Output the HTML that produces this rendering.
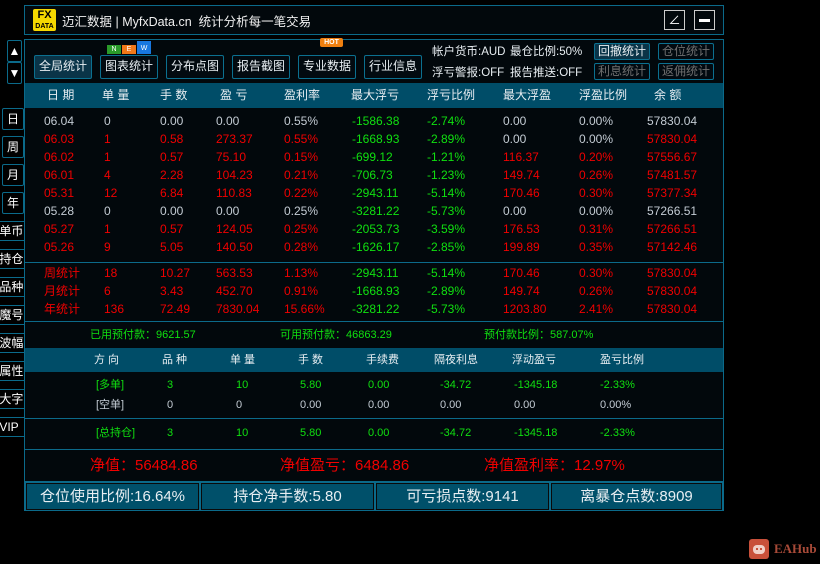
<!DOCTYPE html>
<html><head><meta charset="utf-8"><style>
*{margin:0;padding:0;box-sizing:border-box}
body{width:820px;height:564px;background:#000;position:relative;overflow:hidden;font-family:"Liberation Sans","Noto Sans CJK SC",sans-serif;font-size:12px;color:#d8dde2}
.a{position:absolute;white-space:nowrap}
.box{position:absolute;border:1px solid #0b6a8a}
.btn{position:absolute;border:1px solid #0b7090;background:#020a10;color:#e8eef2;font-size:12px;text-align:center;line-height:21px;border-radius:2px}
.row{position:absolute;left:0;height:18px;line-height:18px;width:700px}
.row span{position:absolute;white-space:nowrap}
.g{color:#c4ccd4}.r{color:#f00000}.gr{color:#10e010}
.lb{position:absolute;left:2px;width:22px;height:22px;border:1px solid #0b6a8a;border-radius:2px;color:#fff;text-align:center;line-height:20px;font-size:12px;background:#000}
.lb2{position:absolute;left:-4px;width:28px;height:20px;border-top:1px solid #0b6a8a;border-bottom:1px solid #0b6a8a;color:#fff;line-height:18px;font-size:12px;overflow:hidden}
.bb{position:absolute;top:483px;height:27px;background:#00506a;border:1px solid #0a0a0a;outline:1px solid #0b6a8a;color:#e8eef2;font-size:15px;text-align:center;line-height:26px}
.inf{position:absolute;white-space:nowrap;color:#e8eef2;font-size:11.5px}
</style></head><body>
<div class="box" style="left:24px;top:5px;width:700px;height:30px;background:#02080c"></div>
<div class="a" style="left:33px;top:9px;width:23px;height:22px;background:#f5d800;border-radius:2px;color:#000;font-weight:bold;text-align:center;line-height:10px;font-size:11px;padding-top:1px">FX<br><span style="font-size:7px">DATA</span></div>
<div class="a" style="left:62px;top:11px;font-size:12.5px;color:#f0f0f0">迈汇数据 | MyfxData.cn &nbsp;统计分析每一笔交易</div>
<div class="a" style="left:664px;top:10px;width:21px;height:20px;border:1px solid #ccc;color:#fff;text-align:center;line-height:18px;font-size:12px">∠</div>
<div class="a" style="left:694px;top:10px;width:21px;height:20px;border:1px solid #ccc"><div class="a" style="left:4px;top:8px;width:11px;height:3px;background:#fff"></div></div>
<div class="lb" style="top:40px;width:15px;left:7px">▲</div>
<div class="lb" style="top:62px;width:15px;left:7px">▼</div>
<div class="lb" style="top:108px">日</div>
<div class="lb" style="top:136px">周</div>
<div class="lb" style="top:164px">月</div>
<div class="lb" style="top:192px">年</div>
<div class="lb2" style="top:221px">&nbsp;单币</div>
<div class="lb2" style="top:249px">&nbsp;持仓</div>
<div class="lb2" style="top:277px">&nbsp;品种</div>
<div class="lb2" style="top:305px">&nbsp;魔号</div>
<div class="lb2" style="top:333px">&nbsp;波幅</div>
<div class="lb2" style="top:361px">&nbsp;属性</div>
<div class="lb2" style="top:389px">&nbsp;大字</div>
<div class="lb2" style="top:417px">&nbsp;VIP</div>
<div class="box" style="left:24px;top:39px;width:700px;height:472px;background:#02080c"></div>
<div class="btn" style="left:34px;top:55px;width:58px;height:24px;background:#0a3448">全局统计</div>
<div class="btn" style="left:100px;top:55px;width:58px;height:24px">图表统计</div>
<div class="btn" style="left:166px;top:55px;width:58px;height:24px">分布点图</div>
<div class="btn" style="left:232px;top:55px;width:58px;height:24px">报告截图</div>
<div class="btn" style="left:298px;top:55px;width:58px;height:24px">专业数据</div>
<div class="btn" style="left:364px;top:55px;width:58px;height:24px">行业信息</div>
<div class="a" style="left:107px;top:45px;width:14px;height:9px;background:#2a9a2a;color:#fff;font-size:7px;text-align:center;line-height:9px">N</div>
<div class="a" style="left:122px;top:45px;width:14px;height:9px;background:#f07818;color:#fff;font-size:7px;text-align:center;line-height:9px">E</div>
<div class="a" style="left:137px;top:41px;width:14px;height:13px;background:#1878e0;color:#fff;font-size:7px;text-align:center;line-height:15px">W</div>
<div class="a" style="left:320px;top:38px;width:23px;height:9px;background:#f08010;color:#fff;font-size:7px;font-weight:bold;text-align:center;line-height:9px;border-radius:2px">HOT</div>
<div class="inf" style="left:432px;top:43px">帐户货币:AUD</div>
<div class="inf" style="left:510px;top:43px">最仓比例:50%</div>
<div class="inf" style="left:432px;top:64px">浮亏警报:OFF</div>
<div class="inf" style="left:510px;top:64px">报告推送:OFF</div>
<div class="btn" style="left:594px;top:43px;width:56px;height:17px;line-height:15px;background:#0a3448">回撤统计</div>
<div class="btn" style="left:658px;top:43px;width:56px;height:17px;line-height:15px;color:#707070">仓位统计</div>
<div class="btn" style="left:594px;top:63px;width:56px;height:17px;line-height:15px;color:#707070">利息统计</div>
<div class="btn" style="left:658px;top:63px;width:56px;height:17px;line-height:15px;color:#707070">返佣统计</div>
<div class="a" style="left:25px;top:83px;width:698px;height:25px;background:#004d68"></div>
<div class="row" style="top:86px;color:#e8eef2"><span style="left:47px">日 期</span><span style="left:102px">单 量</span><span style="left:160px">手 数</span><span style="left:220px">盈 亏</span><span style="left:284px">盈利率</span><span style="left:351px">最大浮亏</span><span style="left:427px">浮亏比例</span><span style="left:503px">最大浮盈</span><span style="left:579px">浮盈比例</span><span style="left:654px">余 额</span></div>
<div class="row" style="top:112px"><span class="g" style="left:44px">06.04</span><span class="g" style="left:104px">0</span><span class="g" style="left:160px">0.00</span><span class="g" style="left:216px">0.00</span><span class="g" style="left:284px">0.55%</span><span class="gr" style="left:352px">-1586.38</span><span class="gr" style="left:427px">-2.74%</span><span class="g" style="left:503px">0.00</span><span class="g" style="left:579px">0.00%</span><span class="g" style="left:647px">57830.04</span></div>
<div class="row r" style="top:130px"><span style="left:44px">06.03</span><span style="left:104px">1</span><span style="left:160px">0.58</span><span style="left:216px">273.37</span><span style="left:284px">0.55%</span><span class="gr" style="left:352px">-1668.93</span><span class="gr" style="left:427px">-2.89%</span><span class="g" style="left:503px">0.00</span><span class="g" style="left:579px">0.00%</span><span style="left:647px">57830.04</span></div>
<div class="row r" style="top:148px"><span style="left:44px">06.02</span><span style="left:104px">1</span><span style="left:160px">0.57</span><span style="left:216px">75.10</span><span style="left:284px">0.15%</span><span class="gr" style="left:352px">-699.12</span><span class="gr" style="left:427px">-1.21%</span><span style="left:503px">116.37</span><span style="left:579px">0.20%</span><span style="left:647px">57556.67</span></div>
<div class="row r" style="top:166px"><span style="left:44px">06.01</span><span style="left:104px">4</span><span style="left:160px">2.28</span><span style="left:216px">104.23</span><span style="left:284px">0.21%</span><span class="gr" style="left:352px">-706.73</span><span class="gr" style="left:427px">-1.23%</span><span style="left:503px">149.74</span><span style="left:579px">0.26%</span><span style="left:647px">57481.57</span></div>
<div class="row r" style="top:184px"><span style="left:44px">05.31</span><span style="left:104px">12</span><span style="left:160px">6.84</span><span style="left:216px">110.83</span><span style="left:284px">0.22%</span><span class="gr" style="left:352px">-2943.11</span><span class="gr" style="left:427px">-5.14%</span><span style="left:503px">170.46</span><span style="left:579px">0.30%</span><span style="left:647px">57377.34</span></div>
<div class="row g" style="top:202px"><span style="left:44px">05.28</span><span style="left:104px">0</span><span style="left:160px">0.00</span><span style="left:216px">0.00</span><span style="left:284px">0.25%</span><span class="gr" style="left:352px">-3281.22</span><span class="gr" style="left:427px">-5.73%</span><span style="left:503px">0.00</span><span style="left:579px">0.00%</span><span style="left:647px">57266.51</span></div>
<div class="row r" style="top:220px"><span style="left:44px">05.27</span><span style="left:104px">1</span><span style="left:160px">0.57</span><span style="left:216px">124.05</span><span style="left:284px">0.25%</span><span class="gr" style="left:352px">-2053.73</span><span class="gr" style="left:427px">-3.59%</span><span style="left:503px">176.53</span><span style="left:579px">0.31%</span><span style="left:647px">57266.51</span></div>
<div class="row r" style="top:238px"><span style="left:44px">05.26</span><span style="left:104px">9</span><span style="left:160px">5.05</span><span style="left:216px">140.50</span><span style="left:284px">0.28%</span><span class="gr" style="left:352px">-1626.17</span><span class="gr" style="left:427px">-2.85%</span><span style="left:503px">199.89</span><span style="left:579px">0.35%</span><span style="left:647px">57142.46</span></div>
<div class="a" style="left:25px;top:262px;width:698px;height:1px;background:#0b6a8a"></div>
<div class="row r" style="top:264px"><span style="left:44px">周统计</span><span style="left:104px">18</span><span style="left:160px">10.27</span><span style="left:216px">563.53</span><span style="left:284px">1.13%</span><span class="gr" style="left:352px">-2943.11</span><span class="gr" style="left:427px">-5.14%</span><span style="left:503px">170.46</span><span style="left:579px">0.30%</span><span style="left:647px">57830.04</span></div>
<div class="row r" style="top:282px"><span style="left:44px">月统计</span><span style="left:104px">6</span><span style="left:160px">3.43</span><span style="left:216px">452.70</span><span style="left:284px">0.91%</span><span class="gr" style="left:352px">-1668.93</span><span class="gr" style="left:427px">-2.89%</span><span style="left:503px">149.74</span><span style="left:579px">0.26%</span><span style="left:647px">57830.04</span></div>
<div class="row r" style="top:300px"><span style="left:44px">年统计</span><span style="left:104px">136</span><span style="left:160px">72.49</span><span style="left:216px">7830.04</span><span style="left:284px">15.66%</span><span class="gr" style="left:352px">-3281.22</span><span class="gr" style="left:427px">-5.73%</span><span style="left:503px">1203.80</span><span style="left:579px">2.41%</span><span style="left:647px">57830.04</span></div>
<div class="a" style="left:25px;top:321px;width:698px;height:1px;background:#0b6a8a"></div>
<div class="row gr" style="top:326px;font-size:11px"><span style="left:90px">已用预付款：9621.57</span><span style="left:280px">可用预付款：46863.29</span><span style="left:484px">预付款比例：587.07%</span></div>
<div class="a" style="left:25px;top:348px;width:698px;height:24px;background:#004d68"></div>
<div class="row" style="top:351px;font-size:11px;color:#e8eef2"><span style="left:94px">方 向</span><span style="left:162px">品 种</span><span style="left:230px">单 量</span><span style="left:298px">手 数</span><span style="left:366px">手续费</span><span style="left:434px">隔夜利息</span><span style="left:512px">浮动盈亏</span><span style="left:600px">盈亏比例</span></div>
<div class="row gr" style="top:376px;font-size:11px"><span style="left:96px">[多单]</span><span style="left:167px">3</span><span style="left:236px">10</span><span style="left:300px">5.80</span><span style="left:368px">0.00</span><span style="left:440px">-34.72</span><span style="left:514px">-1345.18</span><span style="left:600px">-2.33%</span></div>
<div class="row g" style="top:396px;font-size:11px"><span style="left:96px">[空单]</span><span style="left:167px">0</span><span style="left:236px">0</span><span style="left:300px">0.00</span><span style="left:368px">0.00</span><span style="left:440px">0.00</span><span style="left:514px">0.00</span><span style="left:600px">0.00%</span></div>
<div class="a" style="left:25px;top:418px;width:698px;height:1px;background:#0b6a8a"></div>
<div class="row gr" style="top:424px;font-size:11px"><span style="left:96px">[总持仓]</span><span style="left:167px">3</span><span style="left:236px">10</span><span style="left:300px">5.80</span><span style="left:368px">0.00</span><span style="left:440px">-34.72</span><span style="left:514px">-1345.18</span><span style="left:600px">-2.33%</span></div>
<div class="a" style="left:25px;top:449px;width:698px;height:1px;background:#0b6a8a"></div>
<div class="row r" style="top:456px;font-size:15px;height:20px;line-height:20px"><span style="left:90px">净值：56484.86</span><span style="left:280px">净值盈亏：6484.86</span><span style="left:484px">净值盈利率：12.97%</span></div>
<div class="a" style="left:25px;top:481px;width:698px;height:1px;background:#0b6a8a"></div>
<div class="bb" style="left:26px;width:173px">仓位使用比例:16.64%</div>
<div class="bb" style="left:201px;width:173px">持仓净手数:5.80</div>
<div class="bb" style="left:376px;width:173px">可亏损点数:9141</div>
<div class="bb" style="left:551px;width:171px">离暴仓点数:8909</div>
<div class="a" style="left:749px;top:539px;width:20px;height:20px;background:#c8503a;border-radius:3px"><div class="a" style="left:4px;top:6px;width:12px;height:9px;background:#f0d0c8;border-radius:4px"></div><div class="a" style="left:7px;top:9px;width:2px;height:2px;background:#c8503a"></div><div class="a" style="left:11px;top:9px;width:2px;height:2px;background:#c8503a"></div></div>
<div class="a" style="left:774px;top:541px;color:#a84a38;font-family:'Liberation Serif',serif;font-weight:bold;font-size:13px">EAHub</div>
</body></html>
